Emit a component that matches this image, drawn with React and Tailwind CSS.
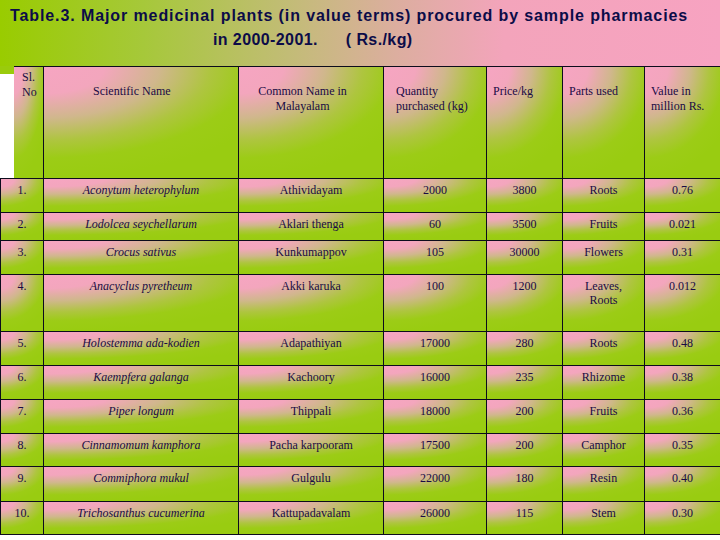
import React from "react";

const cell =
  "bg-[radial-gradient(130%_100%_at_0%_0%,#f6a5c2_0%,#f3a6bd_24%,#d0b78c_46%,#aec53f_66%,#9ccc16_82%,#99cc11_100%)]";

const rows = [
  ["1.", "Aconytum heterophylum", "Athividayam", "2000", "3800", ["Roots"], "0.76"],
  ["2.", "Lodolcea seychellarum", "Aklari thenga", "60", "3500", ["Fruits"], "0.021"],
  ["3.", "Crocus sativus", "Kunkumappov", "105", "30000", ["Flowers"], "0.31"],
  ["4.", "Anacyclus pyretheum", "Akki karuka", "100", "1200", ["Leaves,", "Roots"], "0.012"],
  ["5.", "Holostemma ada-kodien", "Adapathiyan", "17000", "280", ["Roots"], "0.48"],
  ["6.", "Kaempfera galanga", "Kachoory", "16000", "235", ["Rhizome"], "0.38"],
  ["7.", "Piper longum", "Thippali", "18000", "200", ["Fruits"], "0.36"],
  ["8.", "Cinnamomum kamphora", "Pacha karpooram", "17500", "200", ["Camphor"], "0.35"],
  ["9.", "Commiphora mukul", "Gulgulu", "22000", "180", ["Resin"], "0.40"],
  ["10.", "Trichosanthus cucumerina", "Kattupadavalam", "26000", "115", ["Stem"], "0.30"],
];

function Cell({ children, className = "" }) {
  return (
    <div className={`${cell} text-center pt-[4px] leading-[14px] ${className}`}>
      {children}
    </div>
  );
}

export default function App() {
  return (
    <div className="w-[720px] h-[540px] bg-white overflow-hidden font-['Liberation_Serif',serif] text-[12px] text-[#1a0a45]">
      <div className="h-[66px] bg-[linear-gradient(90deg,#99cc00_0%,#a6c83a_20%,#c2bc76_40%,#dcae9f_55%,#f3a4bb_70%,#f7a3c1_100%)] font-['Liberation_Sans',Arial,sans-serif] font-bold text-[16px] leading-[24px] text-[#0c0c48] pt-[4px]">
        <div className="pl-[10px] whitespace-nowrap tracking-[0.9px]">
          Table.3. Major medicinal plants (in value terms) procured by sample pharmacies
        </div>
        <div className="pl-[213px] whitespace-nowrap flex tracking-[0.4px]">
          <span>in 2000-2001.</span>
          <span className="ml-[28px]">( Rs./kg)</span>
        </div>
      </div>
      <div className="grid grid-cols-[43px_194px_144px_102px_75px_81px_75px] grid-rows-[112px_33px_27px_33px_56px_33px_33px_33px_32px_34px_32px] gap-px bg-[#0c0c1c] pb-px">
        <div className="flex bg-white">
          <div className="w-[14px] flex flex-col">
            <div className="h-[8px] bg-[#9acb0c]" />
            <div className="flex-1 bg-white" />
          </div>
          <div className={`flex-1 border-t border-[#0c0c1c] ${cell} pl-[8px] pt-[3px] leading-[15px]`}>
            Sl.
            <br />
            No
          </div>
        </div>
        <div className={`border-t border-[#0c0c1c] ${cell} pl-[49px] pt-[17px] leading-[15px]`}>
          Scientific Name
        </div>
        <div className={`border-t border-[#0c0c1c] ${cell} text-center pr-[17px] pt-[17px] leading-[15px]`}>
          Common Name in
          <br />
          Malayalam
        </div>
        <div className={`border-t border-[#0c0c1c] ${cell} pl-[12px] pt-[17px] leading-[15px]`}>
          Quantity
          <br />
          purchased (kg)
        </div>
        <div className={`border-t border-[#0c0c1c] ${cell} pl-[6px] pt-[17px] leading-[15px]`}>
          Price/kg
        </div>
        <div className={`border-t border-[#0c0c1c] ${cell} pl-[6px] pt-[17px] leading-[15px]`}>
          Parts used
        </div>
        <div className={`border-t border-[#0c0c1c] ${cell} pl-[6px] pt-[17px] leading-[15px]`}>
          Value in
          <br />
          million Rs.
        </div>
        {rows.map((r) => (
          <React.Fragment key={r[0]}>
            <Cell className="border-l border-[#0c0c1c]">{r[0]}</Cell>
            <Cell className="italic">{r[1]}</Cell>
            <Cell>{r[2]}</Cell>
            <Cell>{r[3]}</Cell>
            <Cell>{r[4]}</Cell>
            <Cell>
              {r[5].map((p, i) => (
                <div key={i}>{p}</div>
              ))}
            </Cell>
            <Cell>{r[6]}</Cell>
          </React.Fragment>
        ))}
      </div>
    </div>
  );
}
